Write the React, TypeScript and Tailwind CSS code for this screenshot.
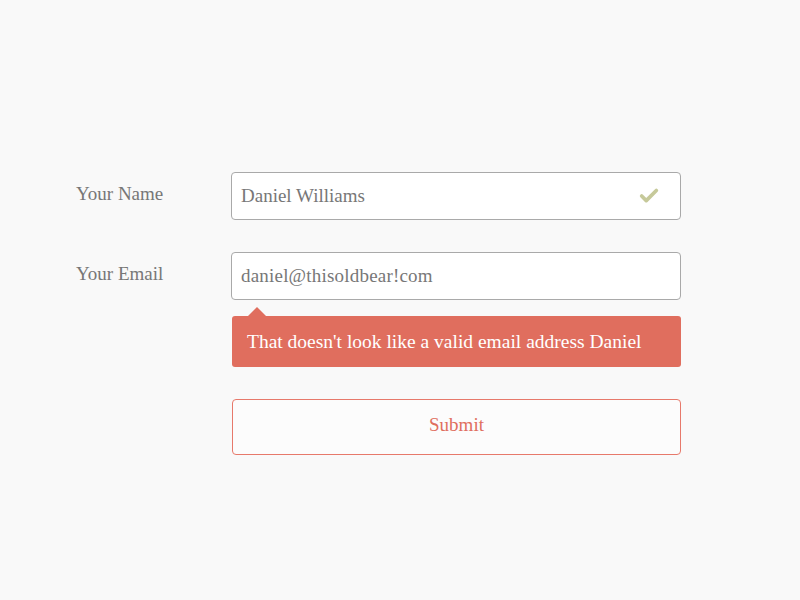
import { Check } from "lucide-react";

export default function App() {
  return (
    <div className="min-h-[600px] w-full bg-[#f9f9f9] pt-[172px] pl-[76px] font-['Liberation_Serif',serif] text-[19px] text-[#777777]">
      <div className="flex flex-col">
        {/* Name row */}
        <div className="flex">
          <label className="w-[155px] pt-[10px] leading-[24px]">Your Name</label>
          <div className="flex h-[48px] w-[450px] items-center justify-between rounded-[4px] border border-[#a9a9a9] bg-white pl-[9px] pr-[20px]">
            <span>Daniel Williams</span>
            <Check className="h-[22px] w-[22px] text-[#c6c99a]" strokeWidth={4} />
          </div>
        </div>

        {/* Email row */}
        <div className="mt-[32px] flex">
          <label className="w-[155px] pt-[10px] leading-[24px]">Your Email</label>
          <div className="flex flex-col">
            <div className="flex h-[48px] w-[450px] items-center rounded-[4px] border border-[#a9a9a9] bg-white pl-[9px]">
              <span className="tracking-[0.2px]">daniel@thisoldbear!com</span>
            </div>
            <div className="relative mt-[16px] ml-px flex h-[51px] w-[449px] items-center rounded-[3px] bg-[#e06e5e] pl-[15px] text-[19.5px] text-white">
              <span className="absolute -top-[9px] left-[16px] h-0 w-0 border-x-[9px] border-b-[9px] border-x-transparent border-b-[#e06e5e]" />
              That doesn't look like a valid email address Daniel
            </div>
            <button className="mt-[32px] ml-px h-[56px] w-[449px] rounded-[4px] border border-[#e7796b] bg-[#fcfcfc] pb-[3px] text-[#e06e5e]">
              Submit
            </button>
          </div>
        </div>
      </div>
    </div>
  );
}
